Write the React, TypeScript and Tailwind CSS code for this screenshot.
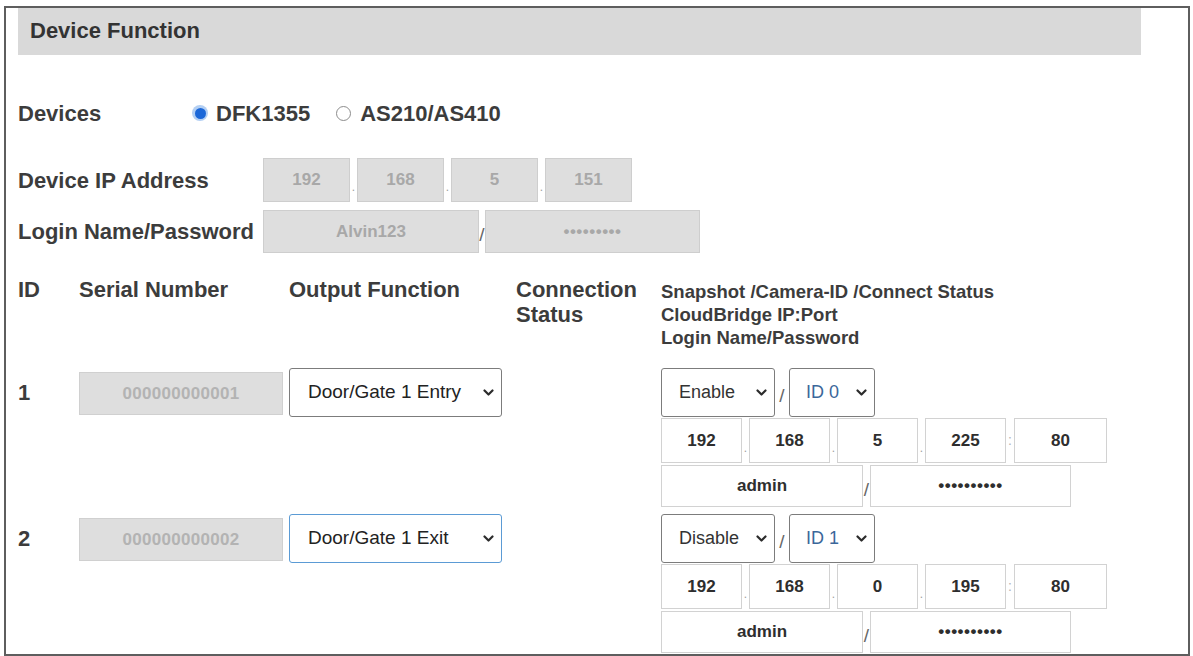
import React from "react";

const Chevron = () => (
  <svg width="11" height="8" viewBox="0 0 11 8" className="shrink-0">
    <polyline points="1.5,1.5 5.5,5.5 9.5,1.5" fill="none" stroke="#2b2b2b" strokeWidth="2.2" strokeLinecap="round" strokeLinejoin="round" />
  </svg>
);

function Dim({ className, children }: { className: string; children: React.ReactNode }) {
  return (
    <div className={"flex items-center justify-center bg-[#dedede] border border-[#cecece] text-[#a8a8a8] font-bold text-[17px] " + className}>
      {children}
    </div>
  );
}

function Box({ className, children }: { className: string; children: React.ReactNode }) {
  return (
    <div className={"flex items-center justify-center bg-white border border-[#d2d2d2] text-[#2e2e2e] font-bold text-[17px] " + className}>
      {children}
    </div>
  );
}

function Dot({ className }: { className: string }) {
  return <div className={"flex items-end justify-center pb-[9px] text-[12px] text-[#a0a0a0] leading-none " + className}>.</div>;
}

function Slash({ className }: { className: string }) {
  return <div className={"flex items-center justify-center text-[19px] text-[#666] font-normal leading-none pt-[6px] " + className}>/</div>;
}

function Camera({ snap, cam, ip }: { snap: string; cam: string; ip: string[] }) {
  return (
    <div className="flex flex-col">
      <div className="flex h-[49px]">
        <div className="w-[114px] h-full flex items-center justify-between pl-[17px] pr-[7px] border border-[#7c7c7c] rounded-[3px] bg-white text-[18px] text-[#333]">
          <span>{snap}</span>
          <Chevron />
        </div>
        <Slash className="w-[14px]" />
        <div className="w-[86px] h-full flex items-center justify-between pl-[16px] pr-[7px] border border-[#7c7c7c] rounded-[3px] bg-white text-[18px] text-[#3b679a]">
          <span>{cam}</span>
          <Chevron />
        </div>
      </div>
      <div className="flex h-[45px] mt-[1px]">
        <Box className="w-[81px]">{ip[0]}</Box>
        <Dot className="w-[7px]" />
        <Box className="w-[81px]">{ip[1]}</Box>
        <Dot className="w-[7px]" />
        <Box className="w-[81px]">{ip[2]}</Box>
        <Dot className="w-[7px]" />
        <Box className="w-[81px]">{ip[3]}</Box>
        <div className="w-[8px] flex items-center justify-center text-[14px] text-[#b5b5b5]">:</div>
        <Box className="w-[93px]">{ip[4]}</Box>
      </div>
      <div className="flex h-[42px] mt-[2px]">
        <Box className="w-[202px]">admin</Box>
        <Slash className="w-[7px]" />
        <Box className="w-[201px] text-[12px] tracking-[0.5px]">••••••••••</Box>
      </div>
    </div>
  );
}

function DeviceRow({
  id,
  serial,
  output,
  focused,
  snap,
  cam,
  ip,
}: {
  id: string;
  serial: string;
  output: string;
  focused?: boolean;
  snap: string;
  cam: string;
  ip: string[];
}) {
  return (
    <div className="grid grid-cols-[61px_210px_227px_145px_1fr] items-start">
      <div className="h-[49px] flex items-center font-bold text-[22px] text-[#3c3c3c]">{id}</div>
      <div className="pt-[4px]">
        <div className="w-[204px] h-[43px] flex items-center justify-center bg-[#dedede] border border-[#d0d0d0] text-[#b3b3b3] font-bold text-[17px] tracking-[0.3px]">
          {serial}
        </div>
      </div>
      <div
        className={
          "w-[213px] h-[49px] flex items-center justify-between pl-[18px] pr-[7px] rounded-[3px] bg-white text-[19px] text-[#222] border " +
          (focused ? "border-[#5b9bd5]" : "border-[#7c7c7c]")
        }
      >
        <span>{output}</span>
        <Chevron />
      </div>
      <div />
      <Camera snap={snap} cam={cam} ip={ip} />
    </div>
  );
}

export default function App() {
  return (
    <div className="w-[1193px] h-[656px] bg-white overflow-hidden font-['Liberation_Sans',Arial,sans-serif]">
      <div className="ml-[4px] mt-[6px] w-[1186px] h-[650px] border-2 border-[#5e5e5e]">
        <div className="ml-[12px] w-[1123px] h-[47px] bg-[#d9d9d9] flex items-center pl-[12px] pb-[2px] font-bold text-[22px] text-[#333]">
          Device Function
        </div>

        <div className="ml-[12px] mr-[12px]">
          {/* Device type */}
          <div className="mt-[45px] h-[26px] flex items-center font-bold text-[22px] text-[#3c3c3c]">
            <div className="w-[174px]">Devices</div>
            <div className="w-[16px] h-[16px] rounded-full bg-[#b3cff3] flex items-center justify-center">
              <div className="w-[11px] h-[11px] rounded-full bg-[#1b67d8]" />
            </div>
            <span className="ml-[8px]">DFK1355</span>
            <div className="ml-[26px] w-[15px] h-[15px] rounded-full border border-[#8c8c8c] bg-white" />
            <span className="ml-[9px]">AS210/AS410</span>
          </div>

          {/* Device address */}
          <div className="mt-[32px] h-[44px] flex items-center">
            <div className="w-[245px] font-bold text-[22px] text-[#3c3c3c]">Device IP Address</div>
            <Dim className="w-[87px] h-full">192</Dim>
            <Dot className="w-[7px] h-full" />
            <Dim className="w-[87px] h-full">168</Dim>
            <Dot className="w-[7px] h-full" />
            <Dim className="w-[87px] h-full">5</Dim>
            <Dot className="w-[7px] h-full" />
            <Dim className="w-[87px] h-full">151</Dim>
          </div>

          <div className="mt-[8px] h-[43px] flex items-center">
            <div className="w-[245px] font-bold text-[22px] text-[#3c3c3c]">Login Name/Password</div>
            <Dim className="w-[216px] h-full">Alvin123</Dim>
            <Slash className="w-[6px] h-full" />
            <Dim className="w-[215px] h-full text-[10px] tracking-[0.5px]">•••••••••</Dim>
          </div>

          {/* Table header */}
          <div className="mt-[24px] grid grid-cols-[61px_210px_227px_145px_1fr] items-start font-bold text-[#3c3c3c]">
            <div className="text-[22px] leading-[25px]">ID</div>
            <div className="text-[22px] leading-[25px]">Serial Number</div>
            <div className="text-[22px] leading-[25px]">Output Function</div>
            <div className="text-[22px] leading-[25px]">
              Connection
              <br />
              Status
            </div>
            <div className="mt-[3px] text-[18.5px] leading-[23px]">
              Snapshot /Camera-ID /Connect Status
              <br />
              CloudBridge IP:Port
              <br />
              Login Name/Password
            </div>
          </div>

          <div className="mt-[19px]">
            <DeviceRow
              id="1"
              serial="000000000001"
              output="Door/Gate 1 Entry"
              snap="Enable"
              cam="ID 0"
              ip={["192", "168", "5", "225", "80"]}
            />
          </div>
          <div className="mt-[7px]">
            <DeviceRow
              id="2"
              serial="000000000002"
              output="Door/Gate 1 Exit"
              focused
              snap="Disable"
              cam="ID 1"
              ip={["192", "168", "0", "195", "80"]}
            />
          </div>
        </div>
      </div>
    </div>
  );
}
